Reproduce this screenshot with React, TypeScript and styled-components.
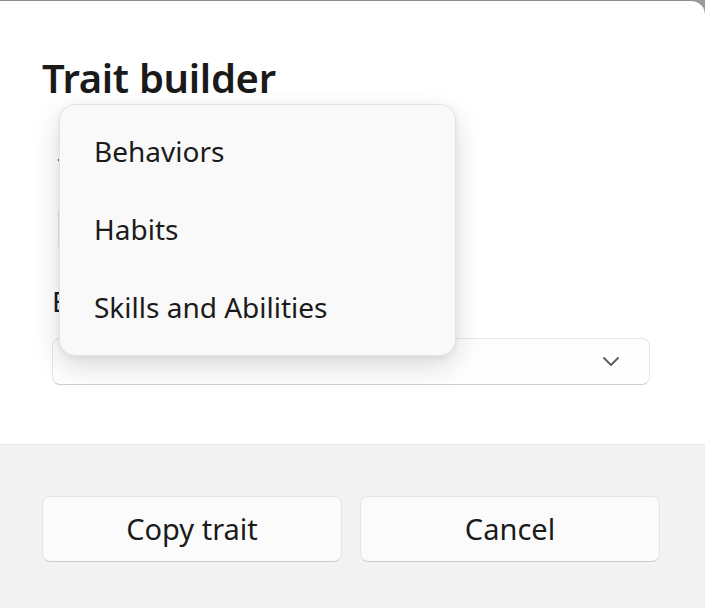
import React from 'react';
import styled, { createGlobalStyle } from 'styled-components';

const GlobalStyle = createGlobalStyle`
  html, body {
    margin: 0;
    padding: 0;
    background: #9a9a9a;
  }
  body {
    font-family: "Noto Sans", "Open Sans", "Liberation Sans", sans-serif;
    color: #1b1b1b;
  }
`;

const Page = styled.div`
  width: 705px;
  height: 608px;
  overflow: hidden;
  background: #9a9a9a;
`;

const Dialog = styled.div`
  position: relative;
  width: 705px;
  height: 608px;
  display: flex;
  flex-direction: column;
  background: #ffffff;
  border-top: 1px solid #8c8c8c;
  border-top-right-radius: 14px;
  box-sizing: border-box;
  overflow: hidden;
`;

const Body = styled.div`
  position: relative;
  height: 443px;
  padding: 49px 55px 0 42px;
  box-sizing: border-box;
`;

const Title = styled.h1`
  margin: 0;
  font-size: 40px;
  font-weight: 600;
  line-height: 56px;
  letter-spacing: -0.3px;
  color: #1a1a1a;
`;

const Fields = styled.div`
  display: flex;
  flex-direction: column;
  gap: 30px;
  margin-top: 43px;
`;

const Field = styled.div<{ indent?: number; width?: string }>`
  display: flex;
  flex-direction: column;
  margin-left: ${(p) => p.indent ?? 10}px;
  width: ${(p) => p.width ?? 'auto'};
`;

const Label = styled.label`
  font-size: 28px;
  line-height: 38px;
  color: #1b1b1b;
  margin-bottom: 18px;
`;

const Combo = styled.div`
  height: 47px;
  box-sizing: border-box;
  display: flex;
  align-items: center;
  justify-content: flex-end;
  padding-right: 30px;
  background: #fefefe;
  border: 1px solid #e6e6e6;
  border-bottom-color: #cfcfcf;
  border-radius: 8px;
`;

const Flyout = styled.ul`
  position: absolute;
  left: 59px;
  top: 103px;
  width: 397px;
  height: 252px;
  box-sizing: border-box;
  margin: 0;
  padding: 7px 0 10px;
  list-style: none;
  background: #f9f9f9;
  border: 1px solid #e3e3e3;
  border-radius: 16px;
  box-shadow: 0 10px 28px rgba(0, 0, 0, 0.14), 0 2px 6px rgba(0, 0, 0, 0.06);
`;

const Option = styled.li`
  height: 78px;
  display: flex;
  align-items: center;
  padding-left: 34px;
  font-size: 28px;
  color: #1b1b1b;
`;

const Footer = styled.div`
  flex: 1;
  display: flex;
  gap: 18px;
  padding: 51px 45px 0 42px;
  background: #f3f3f3;
  border-top: 1px solid #e5e5e5;
`;

const Button = styled.button`
  width: 300px;
  height: 66px;
  box-sizing: border-box;
  font-family: inherit;
  font-size: 29px;
  color: #1b1b1b;
  background: #fbfbfb;
  border: 1px solid #e4e4e4;
  border-bottom-color: #cccccc;
  border-radius: 8px;
  padding: 0 0 2px;
`;

const Chevron = () => (
  <svg width="16" height="9" viewBox="0 0 16 9" fill="none">
    <path d="M1 1L8 8L15 1" stroke="#5c5c5c" strokeWidth="1.8" strokeLinecap="round" strokeLinejoin="round" />
  </svg>
);

const options = ['Behaviors', 'Habits', 'Skills and Abilities'];

export default function App() {
  return (
    <Page>
      <GlobalStyle />
      <Dialog>
        <Body>
          <Title>Trait builder</Title>
          <Fields>
            <Field indent={16} width="398px">
              <Label>Type</Label>
              <Combo />
            </Field>
            <Field>
              <Label>Entry</Label>
              <Combo>
                <Chevron />
              </Combo>
            </Field>
          </Fields>
          <Flyout>
            {options.map((o) => (
              <Option key={o}>{o}</Option>
            ))}
          </Flyout>
        </Body>
        <Footer>
          <Button>Copy trait</Button>
          <Button>Cancel</Button>
        </Footer>
      </Dialog>
    </Page>
  );
}
